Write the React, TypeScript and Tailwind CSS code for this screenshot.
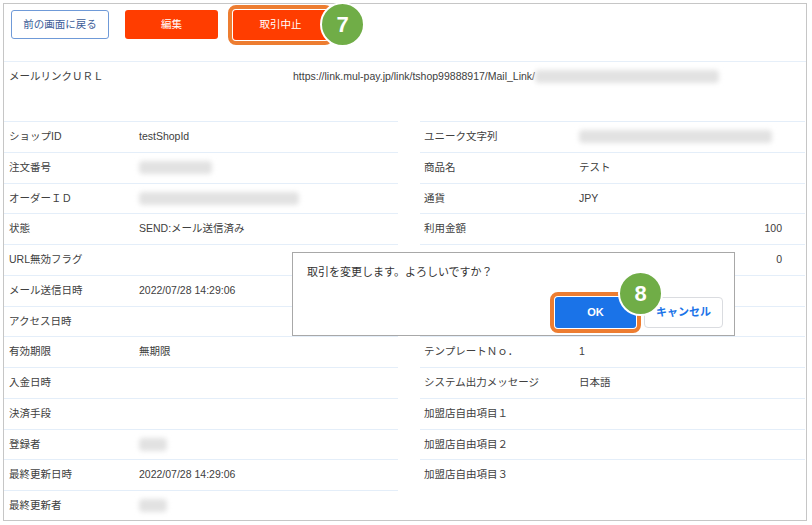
import React from "react";

type Row = { label: string; value?: string; blur?: number; right?: boolean };

const leftRows: Row[] = [
  { label: "ショップID", value: "testShopId" },
  { label: "注文番号", blur: 73 },
  { label: "オーダーＩＤ", blur: 160 },
  { label: "状態", value: "SEND:メール送信済み" },
  { label: "URL無効フラグ" },
  { label: "メール送信日時", value: "2022/07/28 14:29:06" },
  { label: "アクセス日時" },
  { label: "有効期限", value: "無期限" },
  { label: "入金日時" },
  { label: "決済手段" },
  { label: "登録者", blur: 28 },
  { label: "最終更新日時", value: "2022/07/28 14:29:06" },
  { label: "最終更新者", blur: 28 },
];

const rightRows: Row[] = [
  { label: "ユニーク文字列", blur: 193 },
  { label: "商品名", value: "テスト" },
  { label: "通貨", value: "JPY" },
  { label: "利用金額", value: "100", right: true },
  { label: "税送料", value: "0", right: true },
  { label: "URL有効期限" },
  { label: "送信先メールアドレス" },
  { label: "テンプレートＮｏ．", value: "1" },
  { label: "システム出力メッセージ", value: "日本語" },
  { label: "加盟店自由項目１" },
  { label: "加盟店自由項目２" },
  { label: "加盟店自由項目３" },
];

function Blur({ w }: { w: number }) {
  return <div className="h-[13px] bg-[#e2e2e2] blur-[2.5px] rounded-sm" style={{ width: w }} />;
}

function Cell({ row, labelW, pl }: { row: Row; labelW: string; pl: string }) {
  return (
    <div className={`h-[30.75px] border-t border-[#e4eef9] flex items-center ${pl}`}>
      <div className={`${labelW} shrink-0`}>{row.label}</div>
      <div className={`flex-1 ${row.right ? "text-right pr-[23px]" : ""}`}>
        {row.blur ? <Blur w={row.blur} /> : row.value}
      </div>
    </div>
  );
}

function Badge({ n }: { n: string }) {
  return (
    <div className="w-[45px] h-[45px] rounded-full bg-[#70ad47] border-2 border-white flex items-center justify-center text-white text-[22px] font-bold font-['Liberation_Sans',sans-serif]">
      {n}
    </div>
  );
}

export default function App() {
  return (
    <div className="relative w-[812px] h-[525px] bg-white p-[3px] text-[10.5px] text-[#404040] font-['Liberation_Sans','Noto_Sans_CJK_JP',sans-serif]">
      <div className="w-[804px] h-[518px] border border-[#c6c6c6]">
        {/* action buttons */}
        <div className="h-[58px] border-b border-[#e6eff9] flex items-start pt-[6px] pl-[7px]">
          <button className="w-[98px] h-[29px] rounded-[3px] border border-[#6f9ad8] text-[#3d5d99] bg-white">
            前の画面に戻る
          </button>
          <button className="ml-[16px] w-[93px] h-[29px] rounded-[3px] bg-[#ff3d00] text-white">編集</button>
          <button className="ml-[15px] w-[95px] h-[30px] rounded-[3px] bg-[#ff3d00] text-white outline-4 outline-offset-1 outline-[#ed7d31]">
            取引中止
          </button>
        </div>

        {/* mail link url */}
        <div className="h-[59px] flex items-start pt-[7px] pl-[5px]">
          <div className="w-[284px] shrink-0">メールリンクＵＲＬ</div>
          <div className="flex items-center">
            <span>https://link.mul-pay.jp/link/tshop99888917/Mail_Link/</span>
            <Blur w={184} />
          </div>
        </div>

        <div className="flex gap-[22px]">
          <div className="w-[394px]">
            {leftRows.map((r) => (
              <Cell key={r.label} row={r} labelW="w-[130px]" pl="pl-[5px]" />
            ))}
          </div>
          <div className="w-[385px]">
            {rightRows.map((r) => (
              <Cell key={r.label} row={r} labelW="w-[155px]" pl="pl-[4px]" />
            ))}
          </div>
        </div>
      </div>

      <div className="absolute left-[320px] top-[2px]">
        <Badge n="7" />
      </div>

      {/* confirm dialog */}
      <div className="absolute left-[292px] top-[252px] w-[443px] h-[84px] bg-white border border-[#a8a8a8] text-[11px] text-[#333]">
        <div className="pl-[14px] pt-[11px]">取引を変更します。よろしいですか？</div>
        <div className="absolute right-[11px] bottom-[7px] flex gap-[8px]">
          <button className="w-[81px] h-[31px] rounded-[3px] bg-[#1a73e8] text-white font-bold outline-4 outline-offset-1 outline-[#ed7d31]">
            OK
          </button>
          <button className="w-[79px] h-[31px] rounded-[4px] bg-white border border-[#dadce0] text-[#1a73e8] font-bold">
            キャンセル
          </button>
        </div>
        <div className="absolute left-[325px] top-[18px]">
          <Badge n="8" />
        </div>
      </div>
    </div>
  );
}
